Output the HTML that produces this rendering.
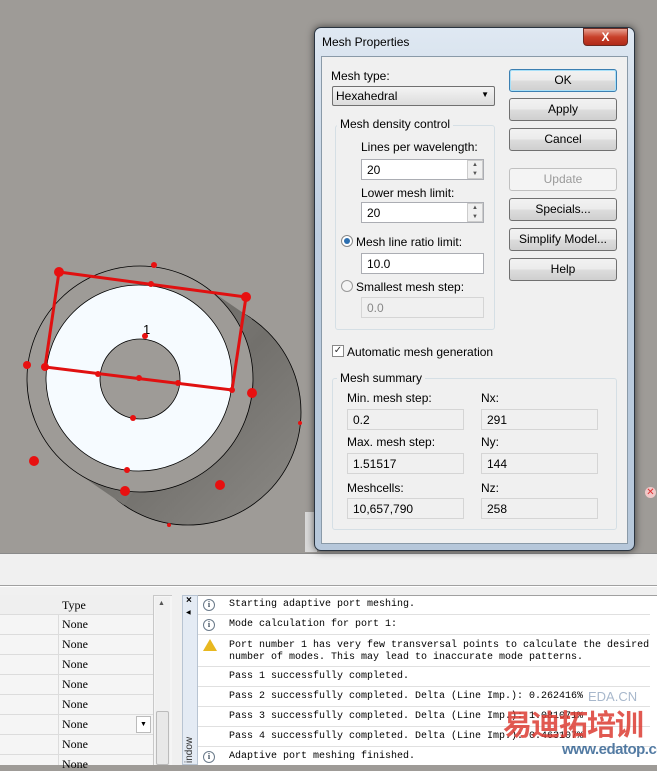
<!DOCTYPE html>
<html><head><meta charset="utf-8"><style>
*{box-sizing:border-box;margin:0;padding:0}
body{width:657px;height:765px;overflow:hidden;position:relative;background:#9e9b97;font-family:"Liberation Sans",sans-serif;font-size:12px;color:#000}
.a{position:absolute}
.t{position:absolute;font-size:12px;white-space:nowrap;line-height:14px}
.ed{position:absolute;background:#fff;border:1px solid #abadb3;font-size:12px;padding:3px 0 0 5px;line-height:14px}
.ro{background:#f0f0f0;border:1px solid #d5d5d5;}
.btn{position:absolute;left:509px;width:108px;height:23px;border:1px solid #707070;border-radius:3px;background:linear-gradient(#f2f2f2 0%,#ebebeb 50%,#dddddd 51%,#cfcfcf 100%);text-align:center;line-height:21px;font-size:12px}
.grp{position:absolute;border:1px solid #d5dfe5;border-radius:3px}
.gl{position:absolute;background:#f0f0f0;padding:0 3px;font-size:12px;line-height:14px}
.mono{font-family:"Liberation Mono",monospace;font-size:10px;white-space:nowrap;position:absolute;line-height:12px}
.row{position:absolute;left:0;width:153px;height:20px;border-bottom:1px solid #dcdcdc}
.lr{position:absolute;left:198px;width:452px;border-bottom:1px solid #e0e0e0}
.ic{position:absolute;left:203px;width:12px;height:12px;border:1px solid #6a7a8a;border-radius:50%;font-size:8px;text-align:center;line-height:10px;font-family:"Liberation Serif",serif;font-weight:bold;color:#345}
</style></head><body>
<svg class="a" style="left:0;top:0" width="320" height="553">
<defs><linearGradient id="g" x1="0" y1="0" x2="1" y2="1"><stop offset="0" stop-color="#8f8d89"/><stop offset="0.5" stop-color="#72706c"/><stop offset="1" stop-color="#8c8a86"/></linearGradient></defs>
<circle cx="188" cy="412" r="113" fill="url(#g)" stroke="#000" stroke-width="0.8"/>
<polygon points="76,472 124,505 252,319 204,286" fill="url(#g)"/>
<circle cx="140" cy="379" r="113" fill="#9e9b97" stroke="#000" stroke-width="0.8"/>
<circle cx="139" cy="378" r="93" fill="#f6fbff" stroke="#000" stroke-width="0.8"/>
<circle cx="140" cy="379" r="40" fill="#9e9b97" stroke="#000" stroke-width="0.8"/>
<text x="143" y="334" font-size="13" font-family="Liberation Sans">1</text>
<polygon points="59,272 246,297 232,390 45,367" fill="none" stroke="#e01010" stroke-width="3"/>
<g fill="#e81010">
<circle cx="59" cy="272" r="5"/><circle cx="246" cy="297" r="5"/><circle cx="232" cy="390" r="3"/><circle cx="45" cy="367" r="4"/>
<circle cx="154" cy="265" r="3"/><circle cx="151" cy="284" r="3"/><circle cx="27" cy="365" r="4"/><circle cx="98" cy="374" r="3"/><circle cx="139" cy="378" r="3"/><circle cx="178" cy="383" r="3"/><circle cx="252" cy="393" r="5"/><circle cx="133" cy="418" r="3"/><circle cx="34" cy="461" r="5"/><circle cx="220" cy="485" r="5"/><circle cx="125" cy="491" r="5"/><circle cx="127" cy="470" r="3"/><circle cx="300" cy="423" r="2"/><circle cx="169" cy="525" r="2"/><circle cx="145" cy="336" r="3"/>
</g></svg>
<div class="a" style="left:305px;top:512px;width:12px;height:40px;background:#d9d9d9"></div>
<div class="a" style="left:645px;top:487px;width:11px;height:11px;border-radius:50%;background:#f0c8c8;text-align:center;line-height:11px;font-size:10px;color:#e03030">✕</div>
<!-- bottom -->
<div class="a" style="left:0;top:553px;width:657px;height:212px;background:#f0f0f0;border-top:1px solid #8a8a8a"></div>
<div class="a" style="left:0;top:585px;width:657px;height:2px;border-top:1px solid #a0a0a0;border-bottom:1px solid #fff"></div>
<div class="a" style="left:0;top:595px;width:172px;height:170px;background:#f5f5f5;border-top:1px solid #c8c8c8"></div>
<div class="a" style="left:58px;top:595px;width:1px;height:170px;background:#dcdcdc"></div>
<div class="a" style="left:153px;top:595px;width:1px;height:170px;background:#c8c8c8"></div>
<div class="row" style="top:595px;height:20px;background:#efefef"></div>
<div class="row" style="top:615px"></div><div class="row" style="top:635px"></div><div class="row" style="top:655px"></div><div class="row" style="top:675px"></div><div class="row" style="top:695px"></div><div class="row" style="top:715px"></div><div class="row" style="top:735px"></div>
<div style="font-family:'Liberation Serif',serif;font-size:11px">
<div class="t" style="left:62px;top:598px">Type</div>
<div class="t" style="left:62px;top:617px">None</div><div class="t" style="left:62px;top:637px">None</div><div class="t" style="left:62px;top:657px">None</div><div class="t" style="left:62px;top:677px">None</div><div class="t" style="left:62px;top:697px">None</div><div class="t" style="left:62px;top:717px">None</div><div class="t" style="left:62px;top:737px">None</div><div class="t" style="left:62px;top:757px">None</div></div>
<div class="a" style="left:136px;top:716px;width:15px;height:17px;border:1px solid #bbb;background:#fff;font-size:7px;text-align:center;line-height:16px">▼</div>
<div class="a" style="left:155px;top:597px;width:15px;height:168px;background:#f0f0f0"></div>
<div class="a" style="left:158px;top:600px;font-size:7px;color:#555">▲</div>
<div class="a" style="left:156px;top:711px;width:13px;height:54px;background:#e8e8e8;border:1px solid #bbb;border-radius:2px"></div>
<div class="a" style="left:182px;top:595px;width:16px;height:170px;background:#e4ebf4;border:1px solid #b8c4d2"></div>
<div class="a" style="left:186px;top:595px;font-size:10px;font-weight:bold">×</div>
<div class="a" style="left:186px;top:609px;font-size:6px">◀</div>
<div class="a" style="left:184px;top:763px;font-size:10px;color:#333;transform:rotate(-90deg);transform-origin:left top">indow</div>
<div class="a" style="left:198px;top:595px;width:459px;height:170px;background:#fff;border-top:1px solid #a0a0a0"></div>
<div class="lr" style="top:595px;height:20px"></div><div class="lr" style="top:615px;height:20px"></div><div class="lr" style="top:635px;height:32px"></div><div class="lr" style="top:667px;height:20px"></div><div class="lr" style="top:687px;height:20px"></div><div class="lr" style="top:707px;height:20px"></div><div class="lr" style="top:727px;height:20px"></div>
<div class="ic" style="top:599px">i</div><div class="ic" style="top:619px">i</div><div class="ic" style="top:751px">i</div>
<div class="a" style="left:203px;top:639px;width:0;height:0;border-left:7px solid transparent;border-right:7px solid transparent;border-bottom:12px solid #e8b820"></div>
<div class="mono" style="left:229px;top:599px">Starting adaptive port meshing.</div>
<div class="mono" style="left:229px;top:619px">Mode calculation for port 1:</div>
<div class="mono" style="left:229px;top:640px">Port number 1 has very few transversal points to calculate the desired</div>
<div class="mono" style="left:229px;top:652px">number of modes. This may lead to inaccurate mode patterns.</div>
<div class="mono" style="left:229px;top:671px">Pass 1 successfully completed.</div>
<div class="mono" style="left:229px;top:691px">Pass 2 successfully completed. Delta (Line Imp.): 0.262416%</div>
<div class="mono" style="left:229px;top:711px">Pass 3 successfully completed. Delta (Line Imp.): 1.081071%</div>
<div class="mono" style="left:229px;top:731px">Pass 4 successfully completed. Delta (Line Imp.): 0.463107%</div>
<div class="mono" style="left:229px;top:751px">Adaptive port meshing finished.</div>
<div class="a" style="left:588px;top:689px;font-size:13px;color:#a8b8cc;white-space:nowrap">EDA.CN</div>
<div class="a" style="left:503px;top:711px;font-size:29px;font-weight:bold;color:rgba(220,60,50,0.85);font-family:'Liberation Sans','Noto Sans CJK SC',sans-serif;line-height:30px;white-space:nowrap;letter-spacing:-1px">易迪拓培训</div>
<div class="a" style="left:562px;top:741px;font-size:15px;font-weight:bold;color:rgba(40,90,140,0.8);white-space:nowrap;letter-spacing:-0.5px">www.edatop.com</div>
<!-- dialog -->
<div class="a" style="left:314px;top:27px;width:321px;height:524px;border:1px solid #2a3440;border-radius:7px;background:linear-gradient(#dfe8f2,#bccde0 40%,#b6c7da);box-shadow:0 0 8px rgba(0,0,0,.6)"></div>
<div class="t" style="left:322px;top:35px;font-size:12px">Mesh Properties</div>
<div class="a" style="left:583px;top:28px;width:45px;height:18px;border:1px solid #6b2a22;border-radius:0 0 4px 4px;background:linear-gradient(#e8a090,#c8402a 50%,#b02a18);color:#fff;font-weight:bold;text-align:center;font-size:12px;line-height:16px">X</div>
<div class="a" style="left:321px;top:56px;width:307px;height:488px;background:#f0f0f0;border:1px solid #8a9aa8"></div>
<div class="t" style="left:331px;top:69px">Mesh type:</div>
<div class="a" style="left:332px;top:86px;width:163px;height:20px;border:1px solid #707070;border-radius:2px;background:linear-gradient(#f4f4f4,#dcdcdc);padding:2px 0 0 3px;line-height:14px">Hexahedral<span style="position:absolute;right:5px;top:1px;font-size:8px">▼</span></div>
<div class="grp" style="left:335px;top:125px;width:160px;height:205px"></div>
<div class="gl" style="left:337px;top:117px">Mesh density control</div>
<div class="t" style="left:361px;top:140px">Lines per wavelength:</div>
<div class="ed" style="left:361px;top:159px;width:123px;height:21px">20</div>
<div class="a" style="left:467px;top:160px;width:16px;height:19px;border:1px solid #ccc;background:#f0f0f0;font-size:6px;line-height:9px;text-align:center;color:#555">▲<br>▼</div>
<div class="t" style="left:361px;top:186px">Lower mesh limit:</div>
<div class="ed" style="left:361px;top:202px;width:123px;height:21px">20</div>
<div class="a" style="left:467px;top:203px;width:16px;height:19px;border:1px solid #ccc;background:#f0f0f0;font-size:6px;line-height:9px;text-align:center;color:#555">▲<br>▼</div>
<div class="a" style="left:341px;top:235px;width:12px;height:12px;border:1px solid #888;border-radius:50%;background:#fff"><div style="margin:2px;width:6px;height:6px;border-radius:50%;background:#2c6fb0"></div></div>
<div class="t" style="left:356px;top:235px">Mesh line ratio limit:</div>
<div class="ed" style="left:361px;top:253px;width:123px;height:21px">10.0</div>
<div class="a" style="left:341px;top:280px;width:12px;height:12px;border:1px solid #999;border-radius:50%;background:#f4f4f4"></div>
<div class="t" style="left:356px;top:280px">Smallest mesh step:</div>
<div class="ed ro" style="left:361px;top:297px;width:123px;height:21px;color:#888">0.0</div>
<div class="a" style="left:332px;top:345px;width:12px;height:12px;border:1px solid #888;background:#fff;font-size:10px;line-height:10px;text-align:center;color:#333">✓</div>
<div class="t" style="left:347px;top:345px">Automatic mesh generation</div>
<div class="grp" style="left:332px;top:378px;width:285px;height:152px"></div>
<div class="gl" style="left:337px;top:371px">Mesh summary</div>
<div class="t" style="left:347px;top:391px">Min. mesh step:</div><div class="t" style="left:481px;top:391px">Nx:</div>
<div class="ed ro" style="left:347px;top:409px;width:117px;height:21px">0.2</div><div class="ed ro" style="left:481px;top:409px;width:117px;height:21px">291</div>
<div class="t" style="left:347px;top:435px">Max. mesh step:</div><div class="t" style="left:481px;top:435px">Ny:</div>
<div class="ed ro" style="left:347px;top:453px;width:117px;height:21px">1.51517</div><div class="ed ro" style="left:481px;top:453px;width:117px;height:21px">144</div>
<div class="t" style="left:347px;top:481px">Meshcells:</div><div class="t" style="left:481px;top:481px">Nz:</div>
<div class="ed ro" style="left:347px;top:498px;width:117px;height:21px">10,657,790</div><div class="ed ro" style="left:481px;top:498px;width:117px;height:21px">258</div>
<div class="btn" style="top:69px;border-color:#3c7fb1;box-shadow:inset 0 0 0 1px #a8e0f8">OK</div>
<div class="btn" style="top:98px">Apply</div>
<div class="btn" style="top:128px">Cancel</div>
<div class="btn" style="top:168px;background:#f4f4f4;border-color:#c0c0c0;color:#9a9a9a">Update</div>
<div class="btn" style="top:198px">Specials...</div>
<div class="btn" style="top:228px">Simplify Model...</div>
<div class="btn" style="top:258px">Help</div>
</body></html>
